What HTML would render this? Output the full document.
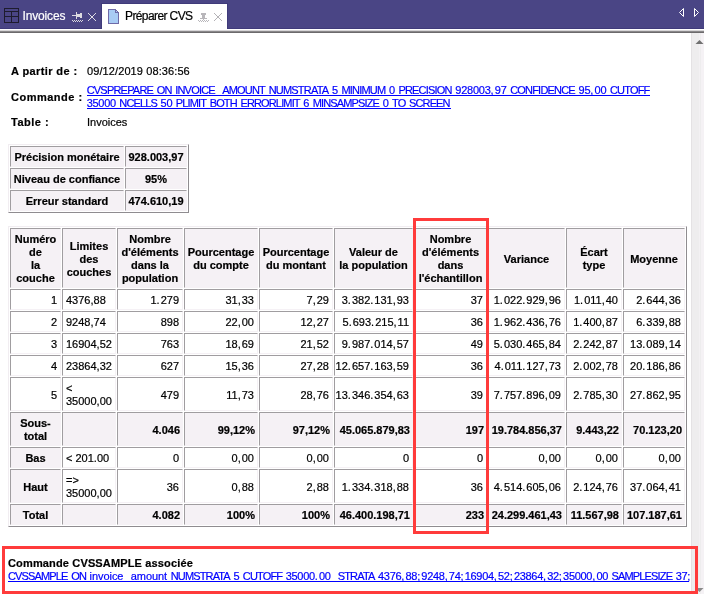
<!DOCTYPE html><html><head><meta charset="utf-8"><style>
*{margin:0;padding:0;box-sizing:border-box}
html,body{width:704px;height:594px;overflow:hidden;background:#fff}
body{will-change:transform}
body{position:relative;font-family:"Liberation Sans",sans-serif;font-size:11px;color:#000;line-height:13px;-webkit-text-stroke:0.2px currentColor}
.a{position:absolute}
.b{font-weight:bold}
.c{position:absolute;border:1px solid;border-color:#a09da0 #f5f1f5 #f5f1f5 #a09da0;display:flex;align-items:center;background:#fff;white-space:nowrap;padding-top:2px}
.c.h{background:#f5f1f5;font-weight:bold}
.c.h.r{padding-right:2px}
.r{justify-content:flex-end;text-align:right;padding-right:3px}
.p{letter-spacing:1px}
.l{justify-content:flex-start;text-align:left;padding-left:3px}
.m{justify-content:center;text-align:center}
.t{position:absolute;border:1px solid;border-color:#f1edf1 #8f8c90 #8f8c90 #f1edf1}
a,.lk{color:#0000ff;text-decoration:underline}
.red{position:absolute;border:3px solid #ff3b3b}
</style></head><body>
<div class="a" style="left:0;top:0;width:704px;height:29px;background:#4a4585"></div>
<div class="a" style="left:0;top:28px;width:704px;height:1px;background:#3f3a7a"></div>
<div class="a" style="left:0;top:29px;width:704px;height:1px;background:#fff"></div>
<div class="a" style="left:0;top:30px;width:704px;height:1px;background:#d8d6d8"></div>
<div class="a" style="left:0;top:31px;width:704px;height:1px;background:#8a888a"></div>
<div class="a" style="left:0;top:32px;width:704px;height:1px;background:#6c6a6c"></div>
<svg class="a" style="left:0;top:0" width="30" height="29" viewBox="0 0 30 29">
<g fill="#1e1c2e">
<rect x="4" y="8" width="15" height="1"/><rect x="4" y="11" width="15" height="1"/><rect x="4" y="16" width="15" height="1"/><rect x="4" y="22" width="15" height="1"/>
<rect x="4" y="8" width="1" height="15"/><rect x="18" y="8" width="1" height="15"/><rect x="11" y="11" width="1" height="12"/>
</g></svg>
<div class="a" style="left:22.5px;top:9px;font-size:12px;line-height:15px;color:#fff;letter-spacing:-0.15px">Invoices</div>
<svg class="a" style="left:0;top:0" width="100" height="29" shape-rendering="crispEdges"><rect x="72" y="15" width="4" height="1" fill="#dcdae0"/><rect x="76" y="12" width="1" height="7" fill="#dcdae0"/><rect x="77" y="14" width="3" height="3" fill="#dcdae0"/><rect x="80" y="13" width="2" height="5" fill="#dcdae0"/><rect x="72" y="20" width="1" height="1" fill="#dcdae0"/><rect x="74" y="20" width="1" height="1" fill="#dcdae0"/><rect x="76" y="20" width="1" height="1" fill="#dcdae0"/><rect x="78" y="20" width="1" height="1" fill="#dcdae0"/><rect x="80" y="20" width="1" height="1" fill="#dcdae0"/><rect x="82" y="20" width="1" height="1" fill="#dcdae0"/><rect x="73" y="21" width="1" height="1" fill="#dcdae0"/><rect x="75" y="21" width="1" height="1" fill="#dcdae0"/><rect x="77" y="21" width="1" height="1" fill="#dcdae0"/><rect x="79" y="21" width="1" height="1" fill="#dcdae0"/><rect x="81" y="21" width="1" height="1" fill="#dcdae0"/><rect x="88" y="13" width="1" height="1" fill="#dedce4"/><rect x="89" y="14" width="1" height="1" fill="#dedce4"/><rect x="90" y="15" width="1" height="1" fill="#dedce4"/><rect x="91" y="16" width="1" height="1" fill="#dedce4"/><rect x="92" y="17" width="1" height="1" fill="#dedce4"/><rect x="93" y="18" width="1" height="1" fill="#dedce4"/><rect x="94" y="19" width="1" height="1" fill="#dedce4"/><rect x="95" y="20" width="1" height="1" fill="#dedce4"/><rect x="95" y="13" width="1" height="1" fill="#dedce4"/><rect x="94" y="14" width="1" height="1" fill="#dedce4"/><rect x="93" y="15" width="1" height="1" fill="#dedce4"/><rect x="92" y="16" width="1" height="1" fill="#dedce4"/><rect x="91" y="17" width="1" height="1" fill="#dedce4"/><rect x="90" y="18" width="1" height="1" fill="#dedce4"/><rect x="89" y="19" width="1" height="1" fill="#dedce4"/><rect x="88" y="20" width="1" height="1" fill="#dedce4"/></svg>
<div class="a" style="left:101px;top:3px;width:127px;height:26px;background:#3f3a7a"></div>
<div class="a" style="left:102px;top:4px;width:125px;height:26px;background:#fff"></div>
<svg class="a" style="left:108px;top:9px" width="12" height="16" viewBox="0 0 12 16" shape-rendering="crispEdges">
<path d="M0.5 0.5 H7.5 L10.5 3.5 V14.5 H0.5 Z" fill="#a8cbf4" stroke="#6e6aa8" stroke-width="1"/>
<path d="M7.5 0.5 V3.5 H10.5" fill="none" stroke="#6e6aa8" stroke-width="1"/>
</svg>
<div class="a" style="left:125px;top:9px;font-size:12px;line-height:15px;color:#000;letter-spacing:-0.6px">Préparer CVS</div>
<svg class="a" style="left:0;top:0" width="230" height="29" shape-rendering="crispEdges"><rect x="201" y="13" width="5" height="2" fill="#b8b6ba"/><rect x="202" y="15" width="3" height="3" fill="#b8b6ba"/><rect x="200" y="18" width="7" height="1" fill="#b8b6ba"/><rect x="203" y="19" width="1" height="1" fill="#b8b6ba"/><rect x="198" y="20" width="1" height="1" fill="#b8b6ba"/><rect x="200" y="20" width="1" height="1" fill="#b8b6ba"/><rect x="202" y="20" width="1" height="1" fill="#b8b6ba"/><rect x="204" y="20" width="1" height="1" fill="#b8b6ba"/><rect x="206" y="20" width="1" height="1" fill="#b8b6ba"/><rect x="208" y="20" width="1" height="1" fill="#b8b6ba"/><rect x="199" y="21" width="1" height="1" fill="#b8b6ba"/><rect x="201" y="21" width="1" height="1" fill="#b8b6ba"/><rect x="203" y="21" width="1" height="1" fill="#b8b6ba"/><rect x="205" y="21" width="1" height="1" fill="#b8b6ba"/><rect x="207" y="21" width="1" height="1" fill="#b8b6ba"/><rect x="214" y="13" width="1" height="1" fill="#b4b2b6"/><rect x="215" y="14" width="1" height="1" fill="#b4b2b6"/><rect x="216" y="15" width="1" height="1" fill="#b4b2b6"/><rect x="217" y="16" width="1" height="1" fill="#b4b2b6"/><rect x="218" y="17" width="1" height="1" fill="#b4b2b6"/><rect x="219" y="18" width="1" height="1" fill="#b4b2b6"/><rect x="220" y="19" width="1" height="1" fill="#b4b2b6"/><rect x="221" y="20" width="1" height="1" fill="#b4b2b6"/><rect x="221" y="13" width="1" height="1" fill="#b4b2b6"/><rect x="220" y="14" width="1" height="1" fill="#b4b2b6"/><rect x="219" y="15" width="1" height="1" fill="#b4b2b6"/><rect x="218" y="16" width="1" height="1" fill="#b4b2b6"/><rect x="217" y="17" width="1" height="1" fill="#b4b2b6"/><rect x="216" y="18" width="1" height="1" fill="#b4b2b6"/><rect x="215" y="19" width="1" height="1" fill="#b4b2b6"/><rect x="214" y="20" width="1" height="1" fill="#b4b2b6"/></svg>
<svg class="a" style="left:676px;top:6px" width="28" height="13" viewBox="0 0 28 13">
<path d="M7.5 2.5 L3.5 6.5 L7.5 10.5 Z" fill="none" stroke="#fff" stroke-width="1"/>
<path d="M18.5 2.5 L22.5 6.5 L18.5 10.5 Z" fill="none" stroke="#fff" stroke-width="1"/>
</svg>
<div class="a" style="left:691px;top:33px;width:13px;height:561px;background:#eeedee"></div>
<div class="a" style="left:691px;top:33px;width:1px;height:561px;background:#e4e2e4"></div>
<div class="a" style="left:699px;top:33px;width:1px;height:561px;background:#f3f1f3"></div>
<div class="a" style="left:701px;top:33px;width:3px;height:561px;background:#f5f2f5"></div>
<svg class="a" style="left:691px;top:33px" width="13" height="561" viewBox="0 0 13 561">
<path d="M4.5 11 L8.5 7 L12.5 11 Z" fill="#707070"/>
<path d="M4.5 555 L12.5 555 L8.5 559 Z" fill="#8a8a8a"/>
</svg>
<div class="a" style="left:11px;top:65px;white-space:nowrap;font-weight:bold;letter-spacing:0.4px">A partir de :</div>
<div class="a" style="left:87px;top:65px;white-space:nowrap;letter-spacing:0.1px">09/12/2019 08:36:56</div>
<div class="a" style="left:11px;top:91px;white-space:nowrap;font-weight:bold;letter-spacing:0.5px">Commande :</div>
<div class="a" style="left:86.70px;top:84px;white-space:nowrap;color:#0000ff"><span style="letter-spacing:-0.799px">CVSPREPARE</span><span style="letter-spacing:0.551px">&nbsp;</span><span style="letter-spacing:-0.799px">ON</span><span style="letter-spacing:0.551px">&nbsp;</span><span style="letter-spacing:-0.799px">INVOICE</span><span style="letter-spacing:1.201px">_</span><span style="letter-spacing:-0.799px">AMOUNT</span><span style="letter-spacing:0.551px">&nbsp;</span><span style="letter-spacing:-0.799px">NUMSTRATA</span><span style="letter-spacing:0.551px">&nbsp;</span><span style="letter-spacing:-0.249px">5</span><span style="letter-spacing:0.551px">&nbsp;</span><span style="letter-spacing:-0.799px">MINIMUM</span><span style="letter-spacing:0.551px">&nbsp;</span><span style="letter-spacing:-0.249px">0</span><span style="letter-spacing:0.551px">&nbsp;</span><span style="letter-spacing:-0.799px">PRECISION</span><span style="letter-spacing:0.551px">&nbsp;</span><span style="letter-spacing:-0.249px">928003</span><span style="letter-spacing:1.201px">,</span><span style="letter-spacing:-0.249px">97</span><span style="letter-spacing:0.551px">&nbsp;</span><span style="letter-spacing:-0.799px">CONFIDENCE</span><span style="letter-spacing:0.551px">&nbsp;</span><span style="letter-spacing:-0.249px">95</span><span style="letter-spacing:1.201px">,</span><span style="letter-spacing:-0.249px">00</span><span style="letter-spacing:0.551px">&nbsp;</span><span style="letter-spacing:-0.799px">CUTOFF</span></div>
<div class="a" style="left:87px;top:95px;width:563px;height:1px;background:#0000ff"></div>
<div class="a" style="left:86.70px;top:97px;white-space:nowrap;color:#0000ff"><span style="letter-spacing:-0.303px">35000</span><span style="letter-spacing:0.497px">&nbsp;</span><span style="letter-spacing:-0.853px">NCELLS</span><span style="letter-spacing:0.497px">&nbsp;</span><span style="letter-spacing:-0.303px">50</span><span style="letter-spacing:0.497px">&nbsp;</span><span style="letter-spacing:-0.853px">PLIMIT</span><span style="letter-spacing:0.497px">&nbsp;</span><span style="letter-spacing:-0.853px">BOTH</span><span style="letter-spacing:0.497px">&nbsp;</span><span style="letter-spacing:-0.853px">ERRORLIMIT</span><span style="letter-spacing:0.497px">&nbsp;</span><span style="letter-spacing:-0.303px">6</span><span style="letter-spacing:0.497px">&nbsp;</span><span style="letter-spacing:-0.853px">MINSAMPSIZE</span><span style="letter-spacing:0.497px">&nbsp;</span><span style="letter-spacing:-0.303px">0</span><span style="letter-spacing:0.497px">&nbsp;</span><span style="letter-spacing:-0.853px">TO</span><span style="letter-spacing:0.497px">&nbsp;</span><span style="letter-spacing:-0.853px">SCREEN</span></div>
<div class="a" style="left:87px;top:108px;width:364px;height:1px;background:#0000ff"></div>
<div class="a" style="left:11px;top:116px;white-space:nowrap;font-weight:bold;letter-spacing:0.5px">Table :</div>
<div class="a" style="left:87px;top:116px;white-space:nowrap;">Invoices</div>
<div class="t" style="left:8px;top:144px;width:181px;height:69px"></div>
<div class="c h m" style="left:10px;top:146px;width:114px;height:21px">Précision monétaire</div>
<div class="c h m" style="left:125px;top:146px;width:62px;height:21px">928.003,97</div>
<div class="c h m" style="left:10px;top:168px;width:114px;height:21px">Niveau de confiance</div>
<div class="c h m" style="left:125px;top:168px;width:62px;height:21px">95%</div>
<div class="c h m" style="left:10px;top:190px;width:114px;height:21px">Erreur standard</div>
<div class="c h m" style="left:125px;top:190px;width:62px;height:21px">474.610,19</div>
<div class="t" style="left:8px;top:226px;width:679px;height:301px"></div>
<div class="c h m" style="left:10px;top:228px;width:51px;height:60px">Numéro<br>de<br>la<br>couche</div>
<div class="c h m" style="left:62px;top:228px;width:54px;height:60px">Limites<br>des<br>couches</div>
<div class="c h m" style="left:117px;top:228px;width:66px;height:60px">Nombre<br>d'éléments<br>dans la<br>population</div>
<div class="c h m" style="left:184px;top:228px;width:74px;height:60px">Pourcentage<br>du compte</div>
<div class="c h m" style="left:259px;top:228px;width:74px;height:60px">Pourcentage<br>du montant</div>
<div class="c h m" style="left:334px;top:228px;width:79px;height:60px">Valeur de<br>la population</div>
<div class="c h m" style="left:414px;top:228px;width:73px;height:60px">Nombre<br>d'éléments<br>dans<br>l'échantillon</div>
<div class="c h m" style="left:488px;top:228px;width:77px;height:60px">Variance</div>
<div class="c h m" style="left:566px;top:228px;width:56px;height:60px">Écart<br>type</div>
<div class="c h m" style="left:623px;top:228px;width:62px;height:60px">Moyenne</div>
<div class="c r" style="left:10px;top:289px;width:51px;height:21px">1</div>
<div class="c l" style="left:62px;top:289px;width:54px;height:21px">4376,88</div>
<div class="c r" style="left:117px;top:289px;width:66px;height:21px">1<span class="p">.</span>279</div>
<div class="c r" style="left:184px;top:289px;width:74px;height:21px">31<span class="p">,</span>33</div>
<div class="c r" style="left:259px;top:289px;width:74px;height:21px">7<span class="p">,</span>29</div>
<div class="c r" style="left:334px;top:289px;width:79px;height:21px">3<span class="p">.</span>382<span class="p">.</span>131<span class="p">,</span>93</div>
<div class="c r" style="left:414px;top:289px;width:73px;height:21px">37</div>
<div class="c r" style="left:488px;top:289px;width:77px;height:21px">1<span class="p">.</span>022<span class="p">.</span>929<span class="p">,</span>96</div>
<div class="c r" style="left:566px;top:289px;width:56px;height:21px">1<span class="p">.</span>011<span class="p">,</span>40</div>
<div class="c r" style="left:623px;top:289px;width:62px;height:21px">2<span class="p">.</span>644<span class="p">,</span>36</div>
<div class="c r" style="left:10px;top:311px;width:51px;height:21px">2</div>
<div class="c l" style="left:62px;top:311px;width:54px;height:21px">9248,74</div>
<div class="c r" style="left:117px;top:311px;width:66px;height:21px">898</div>
<div class="c r" style="left:184px;top:311px;width:74px;height:21px">22<span class="p">,</span>00</div>
<div class="c r" style="left:259px;top:311px;width:74px;height:21px">12<span class="p">,</span>27</div>
<div class="c r" style="left:334px;top:311px;width:79px;height:21px">5<span class="p">.</span>693<span class="p">.</span>215<span class="p">,</span>11</div>
<div class="c r" style="left:414px;top:311px;width:73px;height:21px">36</div>
<div class="c r" style="left:488px;top:311px;width:77px;height:21px">1<span class="p">.</span>962<span class="p">.</span>436<span class="p">,</span>76</div>
<div class="c r" style="left:566px;top:311px;width:56px;height:21px">1<span class="p">.</span>400<span class="p">,</span>87</div>
<div class="c r" style="left:623px;top:311px;width:62px;height:21px">6<span class="p">.</span>339<span class="p">,</span>88</div>
<div class="c r" style="left:10px;top:333px;width:51px;height:21px">3</div>
<div class="c l" style="left:62px;top:333px;width:54px;height:21px">16904,52</div>
<div class="c r" style="left:117px;top:333px;width:66px;height:21px">763</div>
<div class="c r" style="left:184px;top:333px;width:74px;height:21px">18<span class="p">,</span>69</div>
<div class="c r" style="left:259px;top:333px;width:74px;height:21px">21<span class="p">,</span>52</div>
<div class="c r" style="left:334px;top:333px;width:79px;height:21px">9<span class="p">.</span>987<span class="p">.</span>014<span class="p">,</span>57</div>
<div class="c r" style="left:414px;top:333px;width:73px;height:21px">49</div>
<div class="c r" style="left:488px;top:333px;width:77px;height:21px">5<span class="p">.</span>030<span class="p">.</span>465<span class="p">,</span>84</div>
<div class="c r" style="left:566px;top:333px;width:56px;height:21px">2<span class="p">.</span>242<span class="p">,</span>87</div>
<div class="c r" style="left:623px;top:333px;width:62px;height:21px">13<span class="p">.</span>089<span class="p">,</span>14</div>
<div class="c r" style="left:10px;top:355px;width:51px;height:21px">4</div>
<div class="c l" style="left:62px;top:355px;width:54px;height:21px">23864,32</div>
<div class="c r" style="left:117px;top:355px;width:66px;height:21px">627</div>
<div class="c r" style="left:184px;top:355px;width:74px;height:21px">15<span class="p">,</span>36</div>
<div class="c r" style="left:259px;top:355px;width:74px;height:21px">27<span class="p">,</span>28</div>
<div class="c r" style="left:334px;top:355px;width:79px;height:21px">12<span class="p">.</span>657<span class="p">.</span>163<span class="p">,</span>59</div>
<div class="c r" style="left:414px;top:355px;width:73px;height:21px">36</div>
<div class="c r" style="left:488px;top:355px;width:77px;height:21px">4<span class="p">.</span>011<span class="p">.</span>127<span class="p">,</span>73</div>
<div class="c r" style="left:566px;top:355px;width:56px;height:21px">2<span class="p">.</span>002<span class="p">,</span>78</div>
<div class="c r" style="left:623px;top:355px;width:62px;height:21px">20<span class="p">.</span>186<span class="p">,</span>86</div>
<div class="c r" style="left:10px;top:377px;width:51px;height:34px">5</div>
<div class="c l" style="left:62px;top:377px;width:54px;height:34px">&lt;<br>35000,00</div>
<div class="c r" style="left:117px;top:377px;width:66px;height:34px">479</div>
<div class="c r" style="left:184px;top:377px;width:74px;height:34px">11<span class="p">,</span>73</div>
<div class="c r" style="left:259px;top:377px;width:74px;height:34px">28<span class="p">,</span>76</div>
<div class="c r" style="left:334px;top:377px;width:79px;height:34px">13<span class="p">.</span>346<span class="p">.</span>354<span class="p">,</span>63</div>
<div class="c r" style="left:414px;top:377px;width:73px;height:34px">39</div>
<div class="c r" style="left:488px;top:377px;width:77px;height:34px">7<span class="p">.</span>757<span class="p">.</span>896<span class="p">,</span>09</div>
<div class="c r" style="left:566px;top:377px;width:56px;height:34px">2<span class="p">.</span>785<span class="p">,</span>30</div>
<div class="c r" style="left:623px;top:377px;width:62px;height:34px">27<span class="p">.</span>862<span class="p">,</span>95</div>
<div class="c h m" style="left:10px;top:412px;width:51px;height:34px">Sous-<br>total</div>
<div class="c h r" style="left:62px;top:412px;width:54px;height:34px"></div>
<div class="c h r" style="left:117px;top:412px;width:66px;height:34px">4.046</div>
<div class="c h r" style="left:184px;top:412px;width:74px;height:34px">99,12%</div>
<div class="c h r" style="left:259px;top:412px;width:74px;height:34px">97,12%</div>
<div class="c h r" style="left:334px;top:412px;width:79px;height:34px">45.065.879,83</div>
<div class="c h r" style="left:414px;top:412px;width:73px;height:34px">197</div>
<div class="c h r" style="left:488px;top:412px;width:77px;height:34px">19.784.856,37</div>
<div class="c h r" style="left:566px;top:412px;width:56px;height:34px">9.443,22</div>
<div class="c h r" style="left:623px;top:412px;width:62px;height:34px">70.123,20</div>
<div class="c h m" style="left:10px;top:447px;width:51px;height:21px">Bas</div>
<div class="c l" style="left:62px;top:447px;width:54px;height:21px">&lt; 201.00</div>
<div class="c r" style="left:117px;top:447px;width:66px;height:21px">0</div>
<div class="c r" style="left:184px;top:447px;width:74px;height:21px">0<span class="p">,</span>00</div>
<div class="c r" style="left:259px;top:447px;width:74px;height:21px">0<span class="p">,</span>00</div>
<div class="c r" style="left:334px;top:447px;width:79px;height:21px">0</div>
<div class="c r" style="left:414px;top:447px;width:73px;height:21px">0</div>
<div class="c r" style="left:488px;top:447px;width:77px;height:21px">0<span class="p">,</span>00</div>
<div class="c r" style="left:566px;top:447px;width:56px;height:21px">0<span class="p">,</span>00</div>
<div class="c r" style="left:623px;top:447px;width:62px;height:21px">0<span class="p">,</span>00</div>
<div class="c h m" style="left:10px;top:469px;width:51px;height:34px">Haut</div>
<div class="c l" style="left:62px;top:469px;width:54px;height:34px">=&gt;<br>35000,00</div>
<div class="c r" style="left:117px;top:469px;width:66px;height:34px">36</div>
<div class="c r" style="left:184px;top:469px;width:74px;height:34px">0<span class="p">,</span>88</div>
<div class="c r" style="left:259px;top:469px;width:74px;height:34px">2<span class="p">,</span>88</div>
<div class="c r" style="left:334px;top:469px;width:79px;height:34px">1<span class="p">.</span>334<span class="p">.</span>318<span class="p">,</span>88</div>
<div class="c r" style="left:414px;top:469px;width:73px;height:34px">36</div>
<div class="c r" style="left:488px;top:469px;width:77px;height:34px">4<span class="p">.</span>514<span class="p">.</span>605<span class="p">,</span>06</div>
<div class="c r" style="left:566px;top:469px;width:56px;height:34px">2<span class="p">.</span>124<span class="p">,</span>76</div>
<div class="c r" style="left:623px;top:469px;width:62px;height:34px">37<span class="p">.</span>064<span class="p">,</span>41</div>
<div class="c h m" style="left:10px;top:504px;width:51px;height:21px">Total</div>
<div class="c h r" style="left:62px;top:504px;width:54px;height:21px"></div>
<div class="c h r" style="left:117px;top:504px;width:66px;height:21px">4.082</div>
<div class="c h r" style="left:184px;top:504px;width:74px;height:21px">100%</div>
<div class="c h r" style="left:259px;top:504px;width:74px;height:21px">100%</div>
<div class="c h r" style="left:334px;top:504px;width:79px;height:21px">46.400.198,71</div>
<div class="c h r" style="left:414px;top:504px;width:73px;height:21px">233</div>
<div class="c h r" style="left:488px;top:504px;width:77px;height:21px">24.299.461,43</div>
<div class="c h r" style="left:566px;top:504px;width:56px;height:21px">11.567,98</div>
<div class="c h r" style="left:623px;top:504px;width:62px;height:21px">107.187,61</div>
<div class="a" style="left:8px;top:557px;white-space:nowrap;font-weight:bold;letter-spacing:0.15px">Commande CVSSAMPLE associée</div>
<div class="a" style="left:8.00px;top:570px;white-space:nowrap;color:#0000ff"><span style="letter-spacing:-0.850px">CVSSAMPLE</span><span style="letter-spacing:0.500px">&nbsp;</span><span style="letter-spacing:-0.850px">ON</span><span style="letter-spacing:0.500px">&nbsp;</span><span style="letter-spacing:-0.050px">invoice</span><span style="letter-spacing:1.150px">_</span><span style="letter-spacing:-0.050px">amount</span><span style="letter-spacing:0.500px">&nbsp;</span><span style="letter-spacing:-0.850px">NUMSTRATA</span><span style="letter-spacing:0.500px">&nbsp;</span><span style="letter-spacing:-0.300px">5</span><span style="letter-spacing:0.500px">&nbsp;</span><span style="letter-spacing:-0.850px">CUTOFF</span><span style="letter-spacing:0.500px">&nbsp;</span><span style="letter-spacing:-0.300px">35000</span><span style="letter-spacing:1.150px">.</span><span style="letter-spacing:-0.300px">00</span><span style="letter-spacing:0.500px">&nbsp;&nbsp;</span><span style="letter-spacing:-0.850px">STRATA</span><span style="letter-spacing:0.500px">&nbsp;</span><span style="letter-spacing:-0.300px">4376</span><span style="letter-spacing:1.150px">,</span><span style="letter-spacing:-0.300px">88</span><span style="letter-spacing:1.150px">;</span><span style="letter-spacing:-0.300px">9248</span><span style="letter-spacing:1.150px">,</span><span style="letter-spacing:-0.300px">74</span><span style="letter-spacing:1.150px">;</span><span style="letter-spacing:-0.300px">16904</span><span style="letter-spacing:1.150px">,</span><span style="letter-spacing:-0.300px">52</span><span style="letter-spacing:1.150px">;</span><span style="letter-spacing:-0.300px">23864</span><span style="letter-spacing:1.150px">,</span><span style="letter-spacing:-0.300px">32</span><span style="letter-spacing:1.150px">;</span><span style="letter-spacing:-0.300px">35000</span><span style="letter-spacing:1.150px">,</span><span style="letter-spacing:-0.300px">00</span><span style="letter-spacing:0.500px">&nbsp;</span><span style="letter-spacing:-0.850px">SAMPLESIZE</span><span style="letter-spacing:0.500px">&nbsp;</span><span style="letter-spacing:-0.300px">37</span><span style="letter-spacing:1.150px">;</span></div>
<div class="a" style="left:8px;top:581px;width:681px;height:1px;background:#0000ff"></div>
<div class="red" style="left:413px;top:218px;width:76px;height:316px"></div>
<div class="red" style="left:2px;top:546px;width:696px;height:48px"></div>
</body></html>
